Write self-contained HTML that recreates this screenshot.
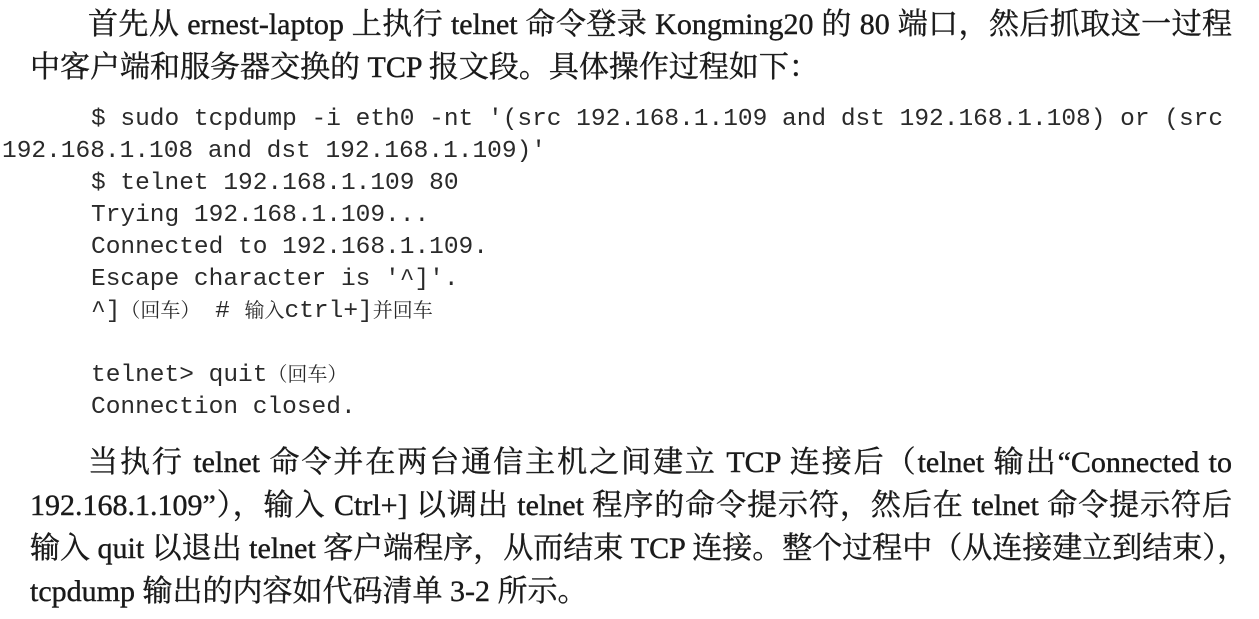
<!DOCTYPE html>
<html><head><meta charset="utf-8"><style>
body{margin:0;width:1259px;height:619px;background:#fff;overflow:hidden;position:relative;color:#1a1a1a}
.t{position:absolute;font-family:"Liberation Serif","Noto Serif CJK SC",serif;font-size:30px;height:40px;line-height:40px;white-space:nowrap;text-align:justify;text-align-last:justify;-webkit-text-stroke:0.4px #1a1a1a}
.c{position:absolute;font-family:"Liberation Mono","Noto Serif CJK SC",monospace;font-size:24.5px;height:32px;line-height:32px;white-space:pre;color:#2a2a2a}
.c span{font-size:20px}
</style></head><body>
<div class="t" style="left:88px;top:5px;width:1144px">首先从 ernest-laptop 上执行 telnet 命令登录 Kongming20 的 80 端口，然后抓取这一过程</div>
<div class="t" style="left:30px;top:48px;text-align-last:left">中客户端和服务器交换的 TCP 报文段。具体操作过程如下：</div>
<div class="c" style="left:91px;top:104px">$ sudo tcpdump -i eth0 -nt '(src 192.168.1.109 and dst 192.168.1.108) or (src</div>
<div class="c" style="left:2px;top:136px">192.168.1.108 and dst 192.168.1.109)'</div>
<div class="c" style="left:91px;top:168px">$ telnet 192.168.1.109 80</div>
<div class="c" style="left:91px;top:200px">Trying 192.168.1.109...</div>
<div class="c" style="left:91px;top:232px">Connected to 192.168.1.109.</div>
<div class="c" style="left:91px;top:264px">Escape character is '^]'.</div>
<div class="c" style="left:91px;top:296px">^]<span>（回车）</span> # <span>输入</span>ctrl+]<span>并回车</span></div>
<div class="c" style="left:91px;top:360px">telnet&gt; quit<span>（回车）</span></div>
<div class="c" style="left:91px;top:392px">Connection closed.</div>
<div class="t" style="left:88px;top:443px;width:1144px">当执行 telnet 命令并在两台通信主机之间建立 TCP 连接后（telnet 输出“Connected to</div>
<div class="t" style="left:30px;top:486px;width:1202px">192.168.1.109”），输入 Ctrl+] 以调出 telnet 程序的命令提示符，然后在 telnet 命令提示符后</div>
<div class="t" style="left:30px;top:529px;width:1202px">输入 quit 以退出 telnet 客户端程序，从而结束 TCP 连接。整个过程中（从连接建立到结束），</div>
<div class="t" style="left:30px;top:572px;text-align-last:left">tcpdump 输出的内容如代码清单 3-2 所示。</div>
</body></html>
